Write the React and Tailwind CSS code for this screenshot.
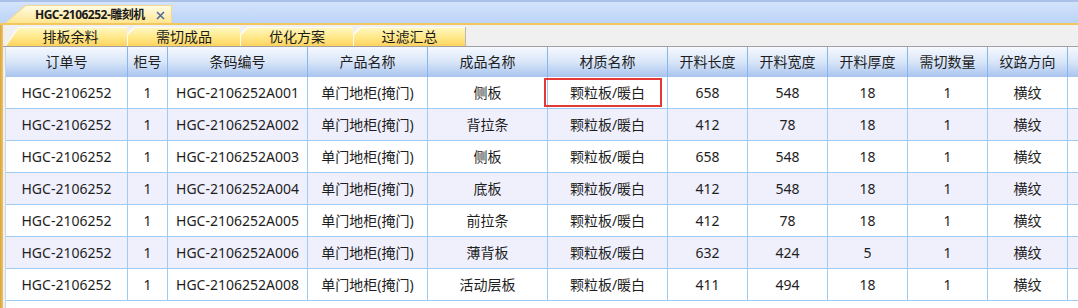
import React from 'react';

const cols = [
  { key: 'order', title: '订单号', w: 'w-[122px]' },
  { key: 'cab', title: '柜号', w: 'w-[40px]' },
  { key: 'code', title: '条码编号', w: 'w-[140px]' },
  { key: 'product', title: '产品名称', w: 'w-[120px]' },
  { key: 'part', title: '成品名称', w: 'w-[120px]' },
  { key: 'mat', title: '材质名称', w: 'w-[120px]' },
  { key: 'len', title: '开料长度', w: 'w-[80px]' },
  { key: 'wid', title: '开料宽度', w: 'w-[80px]' },
  { key: 'thk', title: '开料厚度', w: 'w-[80px]' },
  { key: 'qty', title: '需切数量', w: 'w-[80px]' },
  { key: 'grain', title: '纹路方向', w: 'w-[80px]' },
];

const parts = [
  ['A001', '侧板', '658', '548', '18'],
  ['A002', '背拉条', '412', '78', '18'],
  ['A003', '侧板', '658', '548', '18'],
  ['A004', '底板', '412', '548', '18'],
  ['A005', '前拉条', '412', '78', '18'],
  ['A006', '薄背板', '632', '424', '5'],
  ['A008', '活动层板', '411', '494', '18'],
];

const rows = parts.map(([suffix, part, len, wid, thk]) => ({
  order: 'HGC-2106252',
  cab: '1',
  code: 'HGC-2106252' + suffix,
  product: '单门地柜(掩门)',
  part,
  mat: '颗粒板/暖白',
  len,
  wid,
  thk,
  qty: '1',
  grain: '横纹',
}));

const tabs = [
  { label: '排板余料', w: 'w-[122px]', first: true },
  { label: '需切成品', w: 'w-[113px]' },
  { label: '优化方案', w: 'w-[113px]' },
  { label: '过滤汇总', w: 'w-[112px]' },
];

function SubTab({ label, w, first }) {
  const clip = first
    ? '[clip-path:polygon(13px_0,100%_0,100%_100%,0_100%)]'
    : '[clip-path:polygon(7px_0,100%_0,100%_100%,0_100%,0_7px)]';
  return (
    <div className={`${w} h-[19px] bg-[#fffdf2] ${clip}`}>
      <div
        className={`h-[18px] mt-px ml-px bg-gradient-to-b from-[#fff6bd] via-[#ffe98a] to-[#fdd35e] ${clip} flex items-center justify-center ${first ? 'pl-[8px]' : ''}`}
      >
        <span className="text-[14px] leading-[18px] text-[#1a1a1a]">{label}</span>
      </div>
    </div>
  );
}

export default function App() {
  return (
    <div className="w-[1078px] h-[308px] overflow-hidden bg-white font-['Noto_Sans','Noto_Sans_CJK_SC',sans-serif] flex flex-col">
      {/* document tab strip */}
      <div className="h-[23px] shrink-0 bg-gradient-to-b from-[#d3e3fb] to-[#bcd4f7] border-t-2 border-[#aac2e8] pl-[5px] pt-[3px] flex">
        <div className="w-[167px] h-[18px] bg-[#f1d790] [clip-path:polygon(20px_0,100%_0,100%_100%,0_100%)]">
          <div className="h-[17px] mt-px ml-px mr-px bg-gradient-to-b from-[#fffbe2] to-[#ffe58f] [clip-path:polygon(20px_0,100%_0,100%_100%,0_100%)] flex items-center pl-[29px]">
            <span className="text-[12px] leading-[17px] font-bold tracking-[-0.5px] text-[#1a1a1a]">HGC-2106252-雕刻机</span>
            <svg className="ml-[11px] mt-[2px]" width="9" height="9" viewBox="0 0 9 9">
              <path d="M1 1L8 8M8 1L1 8" stroke="#4e6a9c" strokeWidth="1.6" />
            </svg>
          </div>
        </div>
      </div>
      <div className="h-[2px] shrink-0 bg-[#f3c75e]" />

      <div className="flex flex-1 min-h-0">
        <div className="w-[3px] shrink-0 bg-gradient-to-r from-[#d9a53c] to-[#f0c462]" />
        <div className="flex-1 flex flex-col bg-[#f0f0f0] min-w-0">
          {/* sub tabs */}
          <div className="h-[21px] shrink-0 flex items-end pl-[2px]">
            {tabs.map((t) => (
              <SubTab key={t.label} {...t} />
            ))}
            <div className="w-px h-[19px] bg-[#b8b8b8]" />
          </div>
          <div className="h-px shrink-0 bg-[#a0a0a0]" />

          {/* grid */}
          <div className="flex-1 ml-[2px] bg-white border-l border-[#c8d8ec] flex flex-col text-[14px] text-[#1e1e1e]">
            <div className="h-[30px] shrink-0 flex bg-gradient-to-b from-[#f6f9fe] via-[#d9e6f9] to-[#a8c4ee]">
              {cols.map((c) => (
                <div key={c.key} className={`${c.w} shrink-0 border-r border-[#86b6ee] flex items-center justify-center leading-[20px]`}>
                  {c.title}
                </div>
              ))}
              <div className="flex-1" />
            </div>
            {rows.map((r, i) => (
              <div key={r.code} className={`h-[32px] shrink-0 flex border-b border-[#9ecaf6] ${i % 2 ? 'bg-[#f0f0fd]' : 'bg-white'}`}>
                {cols.map((c) => (
                  <div key={c.key} className={`${c.w} shrink-0 border-r border-[#9ecaf6] flex items-center justify-center leading-[20px] relative`}>
                    {i === 0 && c.key === 'mat' && (
                      <div className="absolute left-[-4px] right-[5px] top-px bottom-px border-2 border-[#e53935]" />
                    )}
                    {r[c.key]}
                  </div>
                ))}
                <div className="flex-1" />
              </div>
            ))}
          </div>
        </div>
      </div>
    </div>
  );
}
